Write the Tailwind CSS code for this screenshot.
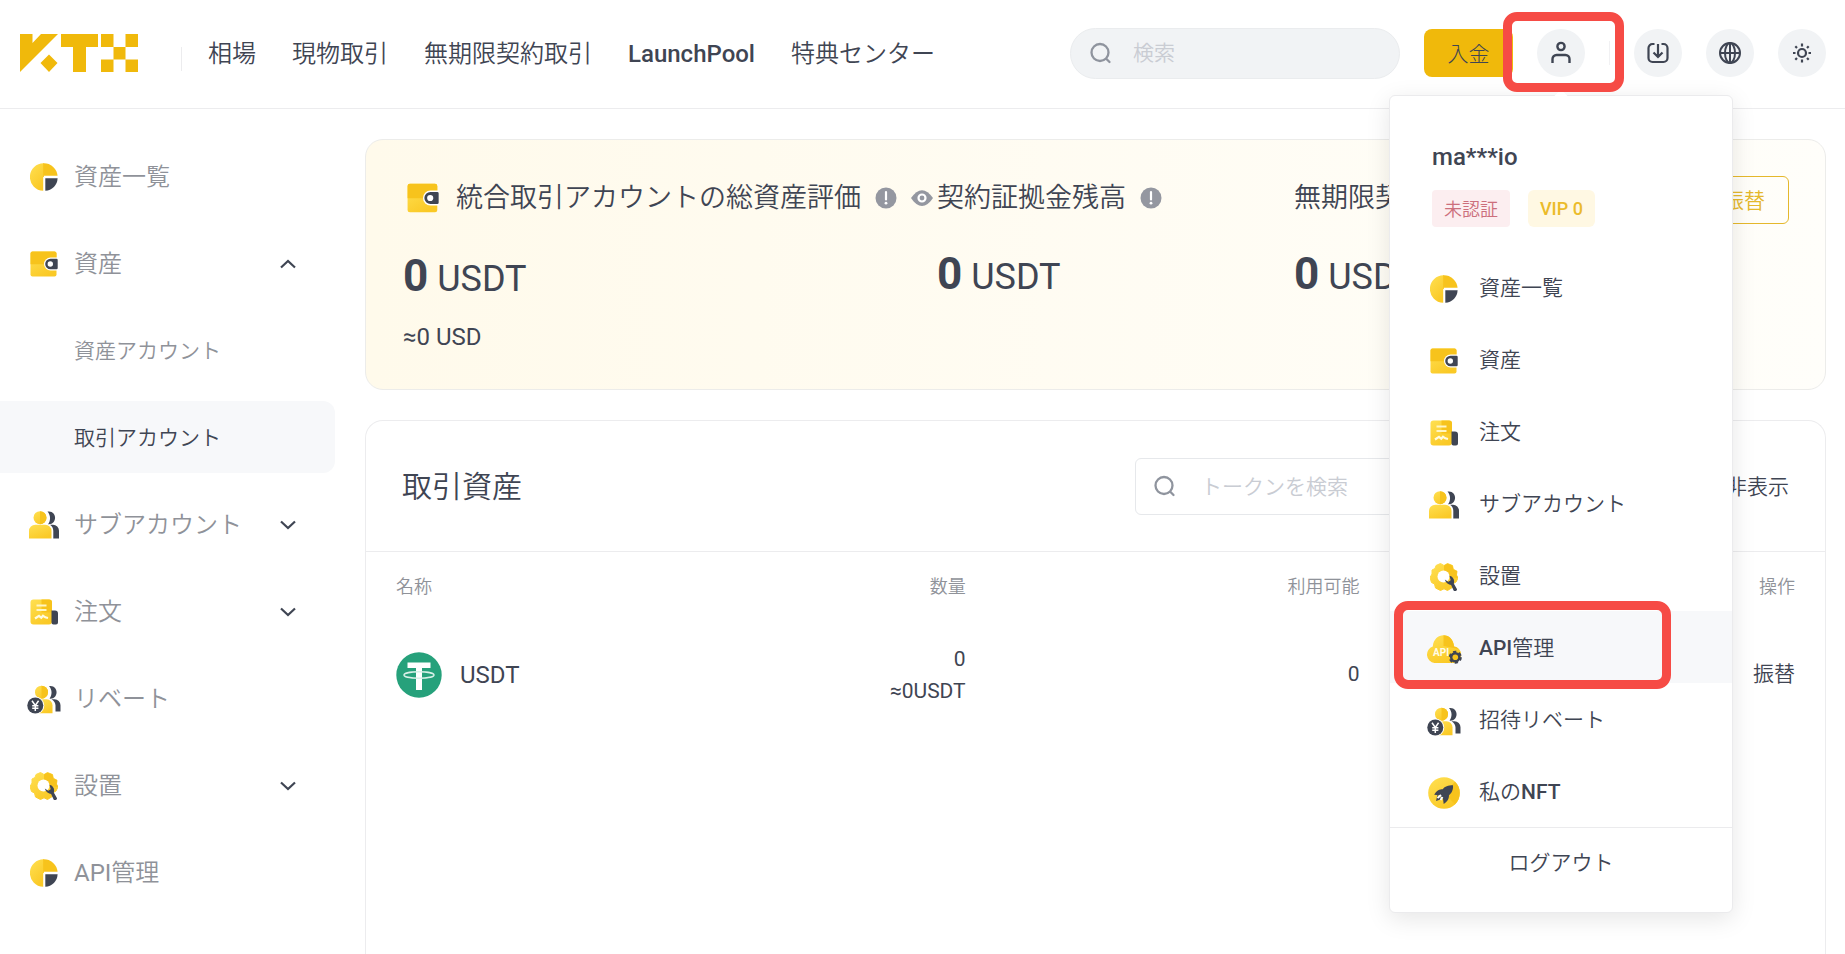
<!DOCTYPE html>
<html lang="ja">
  <head>
    <meta charset="UTF-8" />
    <meta name="viewport" content="width=device-width, initial-scale=1.0" />
    <title>KTX | 取引アカウント</title>
    <script src="https://cdn.jsdelivr.net/npm/@tailwindcss/browser@4"></script>
  </head>

  <body
    class="flex h-screen flex-col overflow-hidden bg-white font-['Roboto','Noto_Sans_CJK_JP',sans-serif] font-[350] text-[#3f4553]"
  >
    <!-- Icon sprite -->
    <svg class="absolute h-0 w-0" aria-hidden="true">
      <defs>
        <linearGradient id="gold" x1="0" y1="0" x2="0.6" y2="1">
          <stop offset="0" stop-color="#ffe052" />
          <stop offset="1" stop-color="#fac926" />
        </linearGradient>
        <symbol id="i-pie" viewBox="0 0 28 28">
          <path d="M14 .3A13.7 13.7 0 0 0 13.2 27.7V14H14Z" fill="url(#gold)" />
          <path d="M13.2 .3A13.7 13.7 0 0 1 27.6 12.8H13.2Z" fill="#f7c31c" />
          <path d="M15.3 15.3H27.6A12.8 12.8 0 0 1 15.3 27.7Z" fill="#3f4553" />
        </symbol>
        <symbol id="i-wallet" viewBox="0 0 28 28">
          <rect x=".5" y="1.5" width="26" height="25" rx="2" fill="url(#gold)" />
          <path d="M.5 14.3V3.5a2 2 0 0 1 2-2h22a2 2 0 0 1 2 2v10.8Z" fill="#f7c31c" />
          <path d="M29 7.5H20.5a6.5 6.5 0 0 0 0 13H29Z" fill="#fff" />
          <path d="M26.5 8.7H20.5a5.3 5.3 0 0 0 0 10.6h6a1.2 1.2 0 0 0 1.2-1.2V9.9a1.2 1.2 0 0 0-1.2-1.2Z" fill="#3f4553" />
          <circle cx="20.3" cy="14" r="2.7" fill="#fff" />
        </symbol>
        <symbol id="i-users" viewBox="0 0 30 28">
          <circle cx="11" cy="6.7" r="6.5" fill="url(#gold)" />
          <path d="M11 .2a6.5 6.5 0 0 1 0 13Z" fill="#f7c31c" />
          <path d="M0 27.5V20a6.3 6.3 0 0 1 6.3-6.3h9.9a6.3 6.3 0 0 1 6.3 6.3v7.5Z" fill="url(#gold)" />
          <path d="M18.5.6c10-1.600 10 13.500.5 12.600 2.800-3.500 2.800-9-.5-12.600Z" fill="#3f4553" />
          <path d="M21 13.700h3a6 6 0 0 1 6 6v7.800h-5.700v-7.500c0-2.500-1-4.800-3.300-6.300Z" fill="#3f4553" />
        </symbol>
        <symbol id="i-order" viewBox="0 0 28 28">
          <rect x=".5" y="1.500" width="21.500" height="25" rx="3" fill="url(#gold)" />
          <path d="M11.500 1.500H19a3 3 0 0 1 3 3V14.500H11.500Z" fill="#f7c31c" />
          <path d="M6.500 7.500h10M6.500 12h10" stroke="#fff6c4" stroke-width="2" />
          <path d="m5 20.500 4-2.700 2.300 2 1.700-2 2.300 1.500 2.700.7" fill="none" stroke="#fffbe0" stroke-width="2.200" />
          <path d="M21.500 12.500h3.500a3 3 0 0 1 3 3V24.500a2 2 0 0 1-2 2h-2.500a2 2 0 0 1-2-2Z" fill="#3f4553" />
        </symbol>
        <symbol id="i-rebate" viewBox="0 0 34 29">
          <circle cx="14.500" cy="7.200" r="6.500" fill="url(#gold)" />
          <path d="M14.500.7a6.500 6.500 0 0 1 0 13Z" fill="#f7c31c" />
          <path d="M10 14.200h9.500a6 6 0 0 1 6 6v8H10Z" fill="url(#gold)" />
          <path d="M22 1c10-1.600 10 13.500.5 12.600 2.800-3.500 2.800-9-.5-12.600Z" fill="#3f4553" />
          <path d="M24.500 14.200h3a6 6 0 0 1 6 6v6.300h-5v-6c0-2.500-1.500-4.800-4-6.300Z" fill="#3f4553" />
          <circle cx="8.300" cy="20.500" r="9" fill="#fff" />
          <circle cx="8.300" cy="20.500" r="8" fill="#3f4553" />
          <path d="m5 15.800 3.300 4.700 3.300-4.700M8.300 20.500v5.500M5.200 20.800h6.200M5.200 23.300h6.200" fill="none" stroke="#fff" stroke-width="1.500" />
        </symbol>
        <symbol id="i-gear" viewBox="0 0 28 28">
          <path d="M10.500.5 14 2.500 17.500.5 22.500 2.500 23.300 6.300 27 8.200 26.500 12 28 15 26 19 23.500 20.500 22.300 24.500 17.500 27.500 14 25.800 10.500 27.500 5.500 25 4.500 21 1.500 19.500 0 14.500 2 11 2 7 5 5.500 6 2.500Z" fill="url(#gold)" stroke="url(#gold)" stroke-linejoin="round" />
          <path d="M14 2.500 17.500.5 22.500 2.500 23.300 6.300 27 8.200 26.500 12 28 15 14 14Z" fill="#f7c31c" />
          <circle cx="13.500" cy="13.500" r="6" fill="#fff" />
          <path d="M14.800 16.500c1.200 4 4 5 6.300 5.500l2.500 5.500c1 1.500 4 .5 3.300-1.500L23.800 20.500c1-3.200-.3-6.700-4.300-7.700l1.200 4.500-2.500 1.500Z" fill="#3f4553" />
        </symbol>
        <symbol id="i-api" viewBox="0 0 36 29">
          <path d="M8.500 28A8.500 8.500 0 0 1 6.800 11.500C8 -3.500 27 -3.500 28 11.500A8.300 8.300 0 0 1 27.500 28Z" fill="url(#gold)" />
          <path d="M17.500.3C23.500.3 27.500 5 28 11.500c2 .4 3.500 1 4.700 2.500L17.500 11Z" fill="#f7c31c" />
          <text x="7" y="20.500" font-size="10" font-weight="700" fill="#fffce8">API</text>
          <circle cx="29.300" cy="22.300" r="5.300" fill="#3f4553" stroke="#3f4553" stroke-width="2.500" stroke-dasharray="3.100 2.450" />
          <circle cx="29.300" cy="22.300" r="2.800" fill="#f7c31c" />
        </symbol>
        <symbol id="i-nft" viewBox="0 0 32 32">
          <circle cx="16" cy="16" r="15.800" fill="url(#gold)" />
          <path d="m16 16 11-11.300A15.800 15.800 0 0 1 27 27.300Z" fill="#f7c31c" />
          <path d="M25 8.200c-5 0-8 1-10.300 4-3 0-6 1-8.500 5.500l5 .5 3.800 3.800.7 5c4-2.500 5.300-5 5.300-8.700C24 15.500 25.300 13 25 8.200Z" fill="#3f4553" />
          <path d="M9.500 17.700 8 24l6-2Z" fill="#3f4553" />
          <path d="m9.500 21 3.500-3M12.500 23l2-3" stroke="#fff" stroke-width="2" />
        </symbol>
        <symbol id="i-search" viewBox="0 0 24 24">
          <g fill="none" stroke="#8f949e" stroke-width="2.300" stroke-linecap="round">
            <circle cx="11" cy="11.500" r="8.500" />
            <path d="m17.500 18 3 3" />
          </g>
        </symbol>
        <symbol id="i-info" viewBox="0 0 22 22">
          <circle cx="11" cy="11" r="10.500" fill="#9497a0" />
          <path d="M11 5v7.500" stroke="#fff" stroke-width="2.200" stroke-linecap="round" />
          <circle cx="11" cy="16.200" r="1.400" fill="#fff" />
        </symbol>
        <symbol id="i-chevron" viewBox="0 0 18 10">
          <path d="m2 1.500 7 6.500 7-6.500" fill="none" stroke="#3f4553" stroke-width="2.200" />
        </symbol>
      </defs>
    </svg>

    <!-- Header -->
    <header
      class="relative z-10 flex h-[109px] shrink-0 items-center justify-between border-b border-[#ececee] pr-[19px] pb-0.5 pl-5"
    >
      <div class="flex items-center">
        <a href="#" aria-label="KTX">
          <svg class="h-[38px] w-[118px]" viewBox="0 0 118 38" fill="#f0b90b">
            <path d="M0 0h12.500v9L21 0h17L0 38Z" />
            <path d="m29 20.500 8.500 8.500-8.500 9-8.500-9Z" />
            <path d="M41 0h37v13H66v25H53V13H41Z" />
            <path d="M81 0h12.500v13H81ZM105.500 0H118v13h-12.500ZM93.500 13h12v12.500h-12ZM81 25.500h12.500V38H81ZM105.500 25.500H118V38h-12.500Z" />
          </svg>
        </a>
        <div class="mt-3 mr-[26px] ml-[43px] h-6 w-px bg-[#ececee]"></div>
        <nav class="flex items-center gap-9 pt-0.5 text-2xl whitespace-nowrap">
          <a href="#">相場</a>
          <a href="#">現物取引</a>
          <a href="#">無期限契約取引</a>
          <a href="#" class="font-medium">LaunchPool</a>
          <a href="#">特典センター</a>
        </nav>
      </div>

      <div class="flex items-center gap-6">
        <label
          class="flex h-[51px] w-[330px] items-center gap-5 rounded-full border border-[#eaecee] bg-[#f1f3f5] pr-6 pl-[18px]"
        >
          <svg class="size-6 shrink-0"><use href="#i-search" /></svg>
          <input
            type="search"
            aria-label="検索"
            placeholder="検索"
            class="w-full min-w-0 bg-transparent pt-0.5 text-[21px] outline-none placeholder:text-[#c9ccd3]"
          />
        </label>
        <div class="flex items-center gap-6">
          <button class="h-12 w-[89px] rounded-lg bg-[#f0b90b] pt-1 text-[21px] font-light">入金</button>

          <div class="relative">
            <button
              aria-label="アカウント"
              class="flex size-12 items-center justify-center rounded-full bg-[#f1f3f5]"
            >
              <svg class="size-6" viewBox="0 0 24 24" fill="none" stroke="#3f4553" stroke-width="2.400">
                <circle cx="12" cy="5.500" r="3.600" />
                <path d="M3.500 22v-4a4 4 0 0 1 4-4h9a4 4 0 0 1 4 4v4" />
              </svg>
            </button>

            <!-- Account menu -->
            <div
              class="absolute top-[66px] left-1/2 w-[344px] -translate-x-1/2 rounded-md border border-[#ebebed] bg-white shadow-[0_6px_24px_rgba(0,0,0,0.1)]"
            >
              <div
                class="absolute -top-1 left-1/2 size-3 -translate-x-1/2 rotate-45 rounded-xs bg-white"
              ></div>
              <div class="relative h-[155px] px-[42px] pt-[45px]">
                <p class="text-2xl leading-8 font-medium">ma***io</p>
                <div class="mt-[17px] flex gap-[18px] text-lg">
                  <span class="flex h-[37px] items-center rounded-sm bg-[#fceef0] px-3 pt-0.5 text-[#cc6f7c]">未認証</span>
                  <span class="flex h-[37px] items-center rounded-md bg-[#fff8e3] px-3 font-medium text-[#ebbb2a]">VIP 0</span>
                </div>
              </div>
              <ul class="text-[21px]">
                <li>
                  <a href="#" class="flex h-18 items-center gap-[17px] pt-1 pl-9">
                    <span class="flex w-9 justify-center"><svg class="size-7"><use href="#i-pie" /></svg></span>資産一覧
                  </a>
                </li>
                <li>
                  <a href="#" class="flex h-18 items-center gap-[17px] pt-1 pl-9">
                    <span class="flex w-9 justify-center"><svg class="size-7"><use href="#i-wallet" /></svg></span>資産
                  </a>
                </li>
                <li>
                  <a href="#" class="flex h-18 items-center gap-[17px] pt-1 pl-9">
                    <span class="flex w-9 justify-center"><svg class="size-7"><use href="#i-order" /></svg></span>注文
                  </a>
                </li>
                <li>
                  <a href="#" class="flex h-18 items-center gap-[17px] pt-1 pl-9">
                    <span class="flex w-9 justify-center"><svg class="h-7 w-[30px]"><use href="#i-users" /></svg></span>サブアカウント
                  </a>
                </li>
                <li>
                  <a href="#" class="flex h-18 items-center gap-[17px] pt-1 pl-9">
                    <span class="flex w-9 justify-center"><svg class="size-7"><use href="#i-gear" /></svg></span>設置
                  </a>
                </li>
                <li class="relative">
                  <a href="#" class="flex h-18 items-center gap-[17px] bg-[#f7f8fa] pt-1 pl-9">
                    <span class="flex w-9 justify-center"><svg class="h-[29px] w-9"><use href="#i-api" /></svg></span>
                    <span><span class="font-medium">API</span>管理</span>
                  </a>
                  <div
                    class="pointer-events-none absolute -top-[10px] -bottom-[6px] left-1 w-[277px] rounded-[14px] border-9 border-[#f64b45]"
                  ></div>
                </li>
                <li>
                  <a href="#" class="flex h-18 items-center gap-[17px] pt-1 pl-9">
                    <span class="flex w-9 justify-center"><svg class="h-[29px] w-[34px]"><use href="#i-rebate" /></svg></span>招待リベート
                  </a>
                </li>
                <li>
                  <a href="#" class="flex h-18 items-center gap-[17px] pt-1 pl-9">
                    <span class="flex w-9 justify-center"><svg class="size-8"><use href="#i-nft" /></svg></span>
                    <span>私の<span class="font-medium">NFT</span></span>
                  </a>
                </li>
              </ul>
              <button
                class="flex h-[85px] w-full justify-center border-t border-[#ebebed] pt-5 text-[21px]"
              >
                ログアウト
              </button>
            </div>

            <div
              class="pointer-events-none absolute -top-[17px] -right-[39px] -bottom-[15px] -left-[34px] rounded-[14px] border-9 border-[#f64b45]"
            ></div>
          </div>

          <div class="h-6 w-px bg-[#f1f1f3]"></div>
          <button
            aria-label="ダウンロード"
            class="flex size-12 items-center justify-center rounded-full bg-[#f1f3f5]"
          >
            <svg class="size-6" viewBox="0 0 24 24" fill="none" stroke="#3f4553" stroke-width="2.200">
              <path d="M8.500 3H6.500a4 4 0 0 0-4 4v10a4 4 0 0 0 4 4h11a4 4 0 0 0 4-4V7a4 4 0 0 0-4-4h-2M12 3v13M7.500 11.500l4.500 4.500 4.500-4.500" />
            </svg>
          </button>
          <button
            aria-label="言語"
            class="flex size-12 items-center justify-center rounded-full bg-[#f1f3f5]"
          >
            <svg class="size-6" viewBox="0 0 24 24" fill="none" stroke="#3f4553" stroke-width="2">
              <circle cx="12" cy="12" r="10" />
              <ellipse cx="12" cy="12" rx="5" ry="10" />
              <path d="M2 12h20M12 2v20" />
            </svg>
          </button>
          <button
            aria-label="テーマ"
            class="flex size-12 items-center justify-center rounded-full bg-[#f1f3f5]"
          >
            <svg class="size-6" viewBox="0 0 24 24" fill="none" stroke="#3f4553" stroke-width="2.200">
              <circle cx="12" cy="12" r="4" />
              <path d="M12 2.500v3M12 18.500v3M3 12h2.500M18.500 12H21M5.300 5.300 7 7M17 17l1.700 1.700M5.300 18.700 7 17M17 7l1.700-1.700" />
            </svg>
          </button>
        </div>
      </div>
    </header>

    <div class="flex min-h-0 flex-1">
      <!-- Sidebar -->
      <aside class="w-[335px] shrink-0 pt-[31px]">
        <nav class="flex flex-col gap-[15px] text-2xl text-[#8f9299]">
          <a href="#" class="flex h-18 items-center gap-3 pt-0.5 pl-[26px]">
            <span class="flex w-9 justify-center"><svg class="size-7"><use href="#i-pie" /></svg></span>資産一覧
          </a>
          <a href="#" class="flex h-18 items-center gap-3 pt-0.5 pr-[38px] pl-[26px]">
            <span class="flex w-9 justify-center"><svg class="size-7"><use href="#i-wallet" /></svg></span>資産
            <svg class="ml-auto h-2.5 w-[18px] rotate-180"><use href="#i-chevron" /></svg>
          </a>
          <a href="#" class="flex h-18 items-center pt-0.5 pl-[74px] text-[21px]">資産アカウント</a>
          <a href="#" class="flex h-18 items-center rounded-r-xl bg-[#f7f8fa] pt-0.5 pl-[74px] text-[21px] text-[#3f4553]">取引アカウント</a>
          <a href="#" class="flex h-18 items-center gap-3 pt-0.5 pr-[38px] pl-[26px]">
            <span class="flex w-9 justify-center"><svg class="h-7 w-[30px]"><use href="#i-users" /></svg></span>サブアカウント
            <svg class="ml-auto h-2.5 w-[18px]"><use href="#i-chevron" /></svg>
          </a>
          <a href="#" class="flex h-18 items-center gap-3 pt-0.5 pr-[38px] pl-[26px]">
            <span class="flex w-9 justify-center"><svg class="size-7"><use href="#i-order" /></svg></span>注文
            <svg class="ml-auto h-2.5 w-[18px]"><use href="#i-chevron" /></svg>
          </a>
          <a href="#" class="flex h-18 items-center gap-3 pt-0.5 pl-[26px]">
            <span class="flex w-9 justify-center"><svg class="h-[29px] w-[34px]"><use href="#i-rebate" /></svg></span>リベート
          </a>
          <a href="#" class="flex h-18 items-center gap-3 pt-0.5 pr-[38px] pl-[26px]">
            <span class="flex w-9 justify-center"><svg class="size-7"><use href="#i-gear" /></svg></span>設置
            <svg class="ml-auto h-2.5 w-[18px]"><use href="#i-chevron" /></svg>
          </a>
          <a href="#" class="flex h-18 items-center gap-3 pt-0.5 pl-[26px]">
            <span class="flex w-9 justify-center"><svg class="size-7"><use href="#i-pie" /></svg></span>
            <span><span class="font-normal">API</span>管理</span>
          </a>
        </nav>
      </aside>

      <main class="flex min-w-0 flex-1 flex-col gap-[30px] pt-[30px] pr-[19px] pl-[30px]">
        <!-- Balance summary -->
        <section
          class="flex h-[251px] shrink-0 rounded-[18px] border border-[#ececea] bg-linear-to-r from-[#fffaeb] to-[#fffefa] pt-9 pr-9 pl-[37px]"
        >
          <div class="w-[534px] shrink-0">
            <div class="flex h-11 items-center">
              <svg class="mr-[17px] ml-1 h-8 w-8"><use href="#i-wallet" /></svg>
              <h2 class="text-[27px] whitespace-nowrap">統合取引アカウントの総資産評価</h2>
              <svg class="ml-3.5 size-[22px] shrink-0"><use href="#i-info" /></svg>
              <button aria-label="残高を表示" class="ml-3.5">
                <svg class="h-[18px] w-[22px]" viewBox="0 0 22 18">
                  <path d="M0 9C7-1.500 15-1.500 22 9 15 19.500 7 19.500 0 9Z" fill="#9497a0" />
                  <circle cx="11" cy="9" r="3.500" fill="none" stroke="#fff" stroke-width="2.200" />
                </svg>
              </button>
            </div>
            <p class="mt-8 text-4xl leading-12 font-normal">
              <span class="text-[44px] font-bold">0</span> USDT
            </p>
            <p class="mt-[18px] text-2xl font-normal">≈0 USD</p>
          </div>
          <div class="w-[357px] shrink-0">
            <div class="flex h-11 items-center gap-3.5">
              <h2 class="text-[27px] whitespace-nowrap">契約証拠金残高</h2>
              <svg class="size-[22px] shrink-0"><use href="#i-info" /></svg>
            </div>
            <p class="mt-[30px] text-4xl leading-12 font-normal">
              <span class="text-[44px] font-bold">0</span> USDT
            </p>
          </div>
          <div class="shrink-0">
            <div class="flex h-11 items-center">
              <h2 class="text-[27px] whitespace-nowrap">無期限契約残高</h2>
            </div>
            <p class="mt-[30px] text-4xl leading-12 font-normal">
              <span class="text-[44px] font-bold">0</span> USDT
            </p>
          </div>
          <button
            class="ml-auto h-12 shrink-0 rounded-md border border-[#e5b82c] px-[23px] pt-1 text-[21px] text-[#e5b82c]"
          >
            振替
          </button>
        </section>

        <!-- Trading assets -->
        <section class="min-h-0 flex-1 rounded-t-[18px] border border-b-0 border-[#ececee]">
          <div class="flex h-[131px] items-center justify-between border-b border-[#ececee] px-9">
            <h2 class="pt-0.5 text-3xl">取引資産</h2>
            <div class="flex items-center gap-12">
              <label
                class="flex h-[57px] w-[402px] items-center gap-6 rounded-md border border-[#e6e8eb] pl-[17px]"
              >
                <svg class="size-6 shrink-0"><use href="#i-search" /></svg>
                <input
                  type="search"
                  aria-label="トークンを検索"
                  placeholder="トークンを検索"
                  class="w-full min-w-0 pt-1 text-[21px] outline-none placeholder:text-[#c9ccd3]"
                />
              </label>
              <label class="flex items-center gap-4 pt-1 text-[21px]">
                <input type="checkbox" class="size-5" />少額資産を非表示
              </label>
            </div>
          </div>
          <table class="w-full table-fixed text-right">
            <colgroup>
              <col class="w-[20%]" />
              <col class="w-[21.1%]" />
              <col class="w-[27%]" />
              <col />
            </colgroup>
            <thead class="text-lg text-[#8f9299]">
              <tr class="h-[70px]">
                <th class="pl-[30px] text-left font-[350]">名称</th>
                <th class="font-[350]">数量</th>
                <th class="font-[350]">利用可能</th>
                <th class="pr-[30px] font-[350]">操作</th>
              </tr>
            </thead>
            <tbody>
              <tr class="h-[106px]">
                <td class="pl-[30px]">
                  <div class="flex items-center gap-[18px] text-2xl font-normal">
                    <svg class="size-[46px]" viewBox="0 0 46 46">
                      <circle cx="23" cy="23" r="22.700" fill="#26a17b" />
                      <path d="M11.500 10.500h23v5.500H26v22h-6V16h-8.500Z" fill="#fff" />
                      <ellipse cx="23" cy="23" rx="15" ry="3.200" fill="none" stroke="#d9f0e8" stroke-width="1.400" />
                    </svg>
                    USDT
                  </div>
                </td>
                <td class="text-[21px] leading-8 font-normal">0<br />≈0USDT</td>
                <td class="text-[21px] font-normal">0</td>
                <td class="pr-[30px] text-[21px]"><a href="#">振替</a></td>
              </tr>
            </tbody>
          </table>
        </section>
      </main>
    </div>
  </body>
</html>
